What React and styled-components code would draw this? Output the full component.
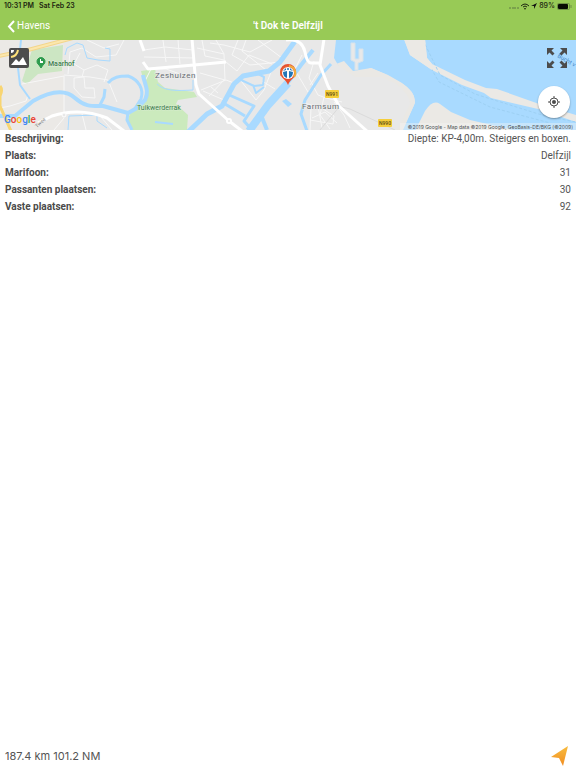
import React from "react";
import styled, { createGlobalStyle } from "styled-components";

const GlobalStyle = createGlobalStyle`
  *, *::before, *::after { box-sizing: border-box; }
  body {
    margin: 0;
    background: #fff;
    color: #545454;
    font-family: Inter, "Liberation Sans", sans-serif;
  }
  button { font: inherit; color: inherit; border: 0; padding: 0; background: none; cursor: pointer; }
  svg { display: block; }
`;

const Page = styled.div`
  display: flex;
  flex-direction: column;
  min-height: 100vh;
`;

const Header = styled.header`
  background: #98ca56;
`;

const StatusBar = styled.div`
  display: flex;
  align-items: center;
  gap: 5px;
  height: 12px;
  padding: 0 4px;
  color: #1d2611;
  font-size: 7px;
  line-height: 12px;
  font-weight: 600;
`;

const StatusIcons = styled.div`
  display: flex;
  align-items: center;
  gap: 2px;
  margin-left: auto;
  font-weight: 500;
`;

const NavBar = styled.nav`
  display: grid;
  grid-template-columns: 1fr auto 1fr;
  align-items: center;
  height: 28px;
  padding: 0 7px;
  color: #fff;
  font-family: Roboto, sans-serif;
`;

const BackButton = styled.button`
  display: flex;
  align-items: center;
  justify-self: start;
  gap: 2px;
  font-size: 10px;
  line-height: 16px;
`;

const Title = styled.h1`
  margin: 0;
  font-size: 10px;
  line-height: 16px;
  font-weight: 600;
`;

const MapPanel = styled.section`
  position: relative;
  height: 90px;
  overflow: hidden;
`;

const MapCanvas = styled.svg`
  width: 100%;
  height: 100%;
`;

const MapControl = styled.button`
  position: absolute;
  top: ${(p) => p.$top}px;
  ${(p) => p.$side}: ${(p) => p.$inset}px;
  color: #4c4c4c;
`;

const LocateButton = styled(MapControl)`
  display: grid;
  place-items: center;
  width: 32px;
  height: 32px;
  border-radius: 50%;
  background: #fff;
  box-shadow: 0 1px 2px rgba(0, 0, 0, 0.35);
`;

const Details = styled.dl`
  flex: 1;
  margin: 0;
  padding: 0 5px;
  font-family: Roboto, sans-serif;
  font-size: 10px;
  line-height: 17px;
`;

const DetailRow = styled.div`
  display: flex;
  justify-content: space-between;
  gap: 16px;
`;

const Label = styled.dt`
  font-weight: 700;
  color: #4a4a4a;
`;

const Value = styled.dd`
  margin: 0;
  text-align: right;
`;

const Footer = styled.footer`
  display: flex;
  align-items: center;
  justify-content: space-between;
  height: 24px;
  padding: 0 7px 0 5px;
  font-size: 11px;
  line-height: 16px;
`;

const details = [
  ["Beschrijving:", "Diepte: KP-4,00m. Steigers en boxen."],
  ["Plaats:", "Delfzijl"],
  ["Marifoon:", "31"],
  ["Passanten plaatsen:", "30"],
  ["Vaste plaatsen:", "92"],
];

const streets = [
  "M64 76L64 36L22 44", "M64 35L90 37L108 40L117 62", "M68 34L70 12L82 8L96 17L116 15L124 0",
  "M74 48L82 57L95 58L94 48L85 48L84 37L74 38L74 48", "M80 13L74 24L84 30L82 37", "M84 30L97 25L108 30L104 42",
  "M87 0L104 8L119 4", "M28 55L26 61L10 66L0 68", "M82 74L86 90M101 77L112 90M64 78L54 90",
  "M144 10L165 7L193 10M163 0L166 22M144 17L194 18M178 0L180 24", "M197 8L224 14L225 40L200 33M202 0L205 16L224 20",
  "M210 3L224 5L250 12L272 0M216 0L224 14M238 0L232 15L250 25L281 22", "M226 22L237 31L249 15L272 24M246 0L242 11L266 30M258 0L282 18",
  "M201 50L226 40L234 43L224 60L203 51M209 56L224 40M211 47L218 53", "M238 37L256 60L264 50L271 32M262 41L275 49",
  "M194 35L180 34L166 29L151 29L144 43", "M314 21L309 38L318 55L326 58L342 62M318 33L310 45",
  "M302 15L294 31L288 47M295 30L308 52", "M303 63L320 67L334 76L333 84L310 80M311 67L310 90M318 66L322 88M334 62L344 75L350 88M324 57L320 75L330 89",
  "M312 78L325 72L337 83",
];

const canals = [
  ["M21 0L18 28L20 45L30 59", 2],
  ["M65 15L67 8L77 3L83 5L87 18L98 20L110 21V9L105 8", 1],
  ["M68 90L69 76L97 75V81L107 88", 1],
  ["M108 43C113 37 119 36 128 36C139 40 144 49 141 59L134 70", 3],
  ["M100 65L104 57L105 49", 3],
  ["M128 72L127 80L132 90", 3],
  ["M0 76H15L33 61C49 52 64 48 75 58C85 67 92 66 103 66L128 73L137 68L145 60C150 51 144 43 143 35", 4],
  ["M157 44C164 51 176 51 193 50V40", 1],
  ["M155 82L173 84", 2],
  ["M188 92L207 74L222 66L234 44L243 36L269 31L280 22L298 -3", 5],
  ["M227 54L254 66L244 81L252 90M225 64L245 76", 3],
  ["M239 39L254 46L263 45L264 37L258 34M253 45L256 53L264 47", 2],
  ["M249 91L268 65L288 43", 8],
  ["M286 45L301 25L313 10", 4],
  ["M261 75L267 90", 4],
  ["M331 24L321 35L305 60L301 74L307 91", 3],
];

const mainRoads = [
  "M38 83L52 76Q80 67 107 78L124 91",
  "M192 -1L196 45L199 54L229 81L242 91",
  "M143 22L148 29L194 25L226 22",
  "M286 0Q302 -2 305 12Q307 23 311 23H320",
  "M324 -1L320 25L328 46L339 66L367 91",
  "M140 0L144 11",
];

const MapText = styled.text`
  font-family: ${(p) => p.$family || "Roboto"}, sans-serif;
  font-size: ${(p) => p.$size}px;
  font-weight: ${(p) => p.$weight || 400};
  fill: ${(p) => p.$fill};
  letter-spacing: ${(p) => p.$spacing || 0}px;
  paint-order: stroke;
  stroke: ${(p) => p.$halo || "none"};
  stroke-width: 1px;
`;

const RoadBadge = ({ x, y, children }) => (
  <g>
    <rect x={x} y={y} width="14" height="8" rx="1" fill="#f5ce3b" />
    <MapText x={x + 7} y={y + 6} $size={5} $weight={500} $fill="#5b4c13" textAnchor="middle">{children}</MapText>
  </g>
);

const HarbourMap = () => (
  <MapCanvas viewBox="0 0 576 90" preserveAspectRatio="xMidYMid slice" role="img" aria-label="Kaart van Delfzijl">
    <rect width="576" height="90" fill="#e8e8e8" />
    <path d="M0 0H64V90H0Z" fill="#ebe9e6" />
    <path d="M32 10L63 5L62 31L38 34L27 44L22 41Z" fill="#cce6c3" />
    <path d="M141 31L155 29L158 42L165 48L194 52L197 57L178 60L176 64L188 75L187 90H132L128 80L130 73L143 62L146 50Z" fill="#cbeabd" />
    <path d="M336 0L334 18L338 25L351 31L356 34L371 28L385 34L401 43Q415 51 415 63L403 90H576V0Z" fill="#a9daff" />
    <path d="M336 24L344 21L353 31L371 28L388 35L402 43Q418 54 414 65L402 91H397L410 64Q410 54 395 43L380 37L355 37Z" fill="#eae8e4" />
    <path d="M404 -1L410 15L432 30L462 45L484 53L491 58L538 69L576 82V75L542 65L497 49L486 48L465 40L432 24L427 18L425 -1Z" fill="#ebe9e5" />
    <path d="M415 91L425 71Q433 59 440 64L451 72L470 80L517 91Z" fill="#ebe9e5" />
    <path d="M351 3H355V19H359V9H363V21L358 23V30H355V22L351 20Z" fill="#e8e8e8" stroke="#d6e3ec" />
    <path d="M423 0L440 35L475 54L545 76L576 82M421 11L439 42L490 67L550 83" fill="none" stroke="#9dd0f3" strokeDasharray="3 2" />
    <path d="M404 -1L410 15L432 30L432 24L427 18L425 -1Z" fill="#ebe9e5" />
    <g fill="none" stroke="#f7f7f7" strokeWidth="1">
      {streets.map((d) => <path key={d} d={d} />)}
    </g>
    <path d="M338 66L350 69L395 90M340 66L320 90" fill="none" stroke="#dadada" />
    <g fill="none" stroke="#a9daff" strokeLinejoin="round">
      {canals.map(([d, w]) => <path key={d} d={d} strokeWidth={w} />)}
    </g>
    <path d="M282 61L286 59L292 64L288 67Z" fill="#a9daff" />
    <g fill="none" stroke="#fff" strokeWidth="3" strokeLinejoin="round">
      {mainRoads.map((d) => <path key={d} d={d} />)}
    </g>
    <circle cx="229" cy="81" r="2" fill="#e8e8e8" stroke="#fff" strokeWidth="2" />
    <circle cx="64" cy="75" r="2" fill="#e8e8e8" stroke="#fff" />
    <path d="M-1 16L28 10L73 -2" fill="none" stroke="#f3d58b" strokeWidth="4" />
    <path d="M-1 16L28 10L73 -2" fill="none" stroke="#fbe7ae" strokeWidth="2" />
    <path d="M0 46Q3 50 0 56V66L11 91" fill="none" stroke="#f8d572" strokeWidth="3" />

    <path d="M41 28L39 25A4 4 0 1 1 43 25Z" fill="#2e9b4e" stroke="#2e9b4e" />
    <path d="M40 19H41V21H43V23H40Z" fill="#fff" />
    <MapText x="48" y="26" $size={7} $weight={500} $fill="#3c7d4c" $halo="#e8efe4">Maarhof</MapText>
    <MapText x="155" y="38" $size={8} $fill="#686d72" $spacing={0.5} $halo="#eee">Zeshuizen</MapText>
    <MapText x="137" y="70" $size={7} $fill="#3b7b4d" $halo="#d7edce">Tuikwerderrak</MapText>
    <MapText x="302" y="69" $size={8} $fill="#686d72" $spacing={0.5} $halo="#eee">Farmsum</MapText>
    <MapText x="37" y="88" $size={5} $fill="#777" transform="rotate(-42 37 88)">Twee</MapText>
    <MapText x="557" y="17" $size={6} $fill="#4889c7" transform="rotate(30 557 17)">Bucht v</MapText>
    <RoadBadge x={325} y={50}>N991</RoadBadge>
    <RoadBadge x={378} y={79}>N990</RoadBadge>

    <path d="M288 45C286 39 280 38 280 32A8 8 0 0 1 296 32C296 38 290 39 288 45Z" fill="#e9502f" />
    <path d="M281 36A8 8 0 0 1 295 29" fill="none" stroke="#e06d39" />
    <path d="M289 26A7 7 0 0 1 294 37" fill="none" stroke="#f0ae3c" strokeWidth="2" />
    <circle cx="288" cy="33" r="6" fill="#fff" />
    <path d="M287 31V38Q283 37 283 32ZM289 31V38Q293 37 293 32ZM283 31L286 28V30ZM293 31L290 28V30Z" fill="#2376b7" />
    <circle cx="288" cy="29" r="1" fill="#2376b7" />

    <rect x="400" y="83" width="176" height="7" fill="#f5f5f5" fillOpacity="0.4" />
    <MapText x="573" y="89" $size={5} $family="Inter" $fill="#4d5052" textAnchor="end">©2019 Google - Map data ©2019 Google, GeoBasis-DE/BKG (©2009)</MapText>
    <MapText x="4" y="83" $size={10} $weight={500} $fill="#4285f4">
      G<tspan fill="#ea4335">o</tspan><tspan fill="#fbbc05">o</tspan>g<tspan fill="#34a853">l</tspan><tspan fill="#ea4335">e</tspan>
    </MapText>
  </MapCanvas>
);

const SatelliteIcon = () => (
  <svg width="20" height="20" viewBox="0 0 20 20">
    <rect width="20" height="20" rx="2" fill="#4c4c4c" />
    <path d="M2 2H5Q5 5 2 5Z" fill="#fff" />
    <path d="M2 9Q8 8 9 2" fill="none" stroke="#ffe27a" strokeWidth="2" />
    <path d="M2 17L7 11L10 14L14 9L18 17Z" fill="#fff" />
  </svg>
);

const ExpandIcon = () => (
  <svg width="22" height="22" viewBox="0 0 22 22" fill="currentColor">
    {[0, 90, 180, 270].map((angle) => (
      <path key={angle} transform={`rotate(${angle} 11 11)`} d="M1 1H8L5.5 3.5L8.5 6.5L6.5 8.5L3.5 5.5L1 8Z" />
    ))}
  </svg>
);

const LocateIcon = () => (
  <svg width="14" height="14" viewBox="0 0 14 14" fill="none" stroke="currentColor">
    <circle cx="7" cy="7" r="4" strokeWidth="1" />
    <circle cx="7" cy="7" r="2" fill="currentColor" stroke="none" />
    <path d="M7 1V3M7 11V13M1 7H3M11 7H13" />
  </svg>
);

export default function App() {
  return (
    <Page>
      <GlobalStyle />
      <Header>
        <StatusBar>
          <span>10:31 PM</span>
          <span>Sat Feb 23</span>
          <StatusIcons>
            <svg width="10" height="8" viewBox="0 0 10 8" fill="#72944a">
              <circle cx="1" cy="6" r="1" /><circle cx="4" cy="6" r="1" /><circle cx="6" cy="6" r="1" /><circle cx="9" cy="6" r="1" />
            </svg>
            <svg width="8" height="7" viewBox="0 0 8 7" fill="none" stroke="#1d2611">
              <path d="M0 3Q4 -1 8 3M2 4Q4 2 6 4" /><path d="M3 5H5L4 7Z" fill="#1d2611" stroke="none" />
            </svg>
            <svg width="6" height="6" viewBox="0 0 6 6"><path d="M6 0L3 6V3H0Z" fill="#111" /></svg>
            <span>89%</span>
            <svg width="15" height="7" viewBox="0 0 15 7">
              <rect x="0.5" y="0.5" width="12" height="6" rx="1" fill="none" stroke="#6e9145" />
              <rect x="1" y="1" width="10" height="5" rx="1" fill="#080b04" />
              <path d="M14 2V5" stroke="#6e9145" />
            </svg>
          </StatusIcons>
        </StatusBar>
        <NavBar>
          <BackButton type="button">
            <svg width="8" height="13" viewBox="0 0 8 13" fill="none" stroke="#fff" strokeWidth="2"><path d="M7 1L2 6.5L7 12" /></svg>
            Havens
          </BackButton>
          <Title>'t Dok te Delfzijl</Title>
        </NavBar>
      </Header>
      <MapPanel>
        <HarbourMap />
        <MapControl type="button" aria-label="Satelliet" $top={8} $side="left" $inset={9}><SatelliteIcon /></MapControl>
        <MapControl type="button" aria-label="Volledig scherm" $top={7} $side="right" $inset={8}><ExpandIcon /></MapControl>
        <LocateButton type="button" aria-label="Mijn locatie" $top={46} $side="right" $inset={6}><LocateIcon /></LocateButton>
      </MapPanel>
      <Details>
        {details.map(([label, value]) => (
          <DetailRow key={label}>
            <Label>{label}</Label>
            <Value>{value}</Value>
          </DetailRow>
        ))}
      </Details>
      <Footer>
        <span>187.4 km 101.2 NM</span>
        <button type="button" aria-label="Navigeren">
          <svg width="19" height="22" viewBox="0 0 19 22">
            <defs>
              <linearGradient id="arrow" x1="0" y1="0" x2="0" y2="1">
                <stop stopColor="#f8bd40" /><stop offset="1" stopColor="#f18c20" />
              </linearGradient>
            </defs>
            <path d="M18 1L13 21L9 13L1 12Z" fill="url(#arrow)" />
          </svg>
        </button>
      </Footer>
    </Page>
  );
}
